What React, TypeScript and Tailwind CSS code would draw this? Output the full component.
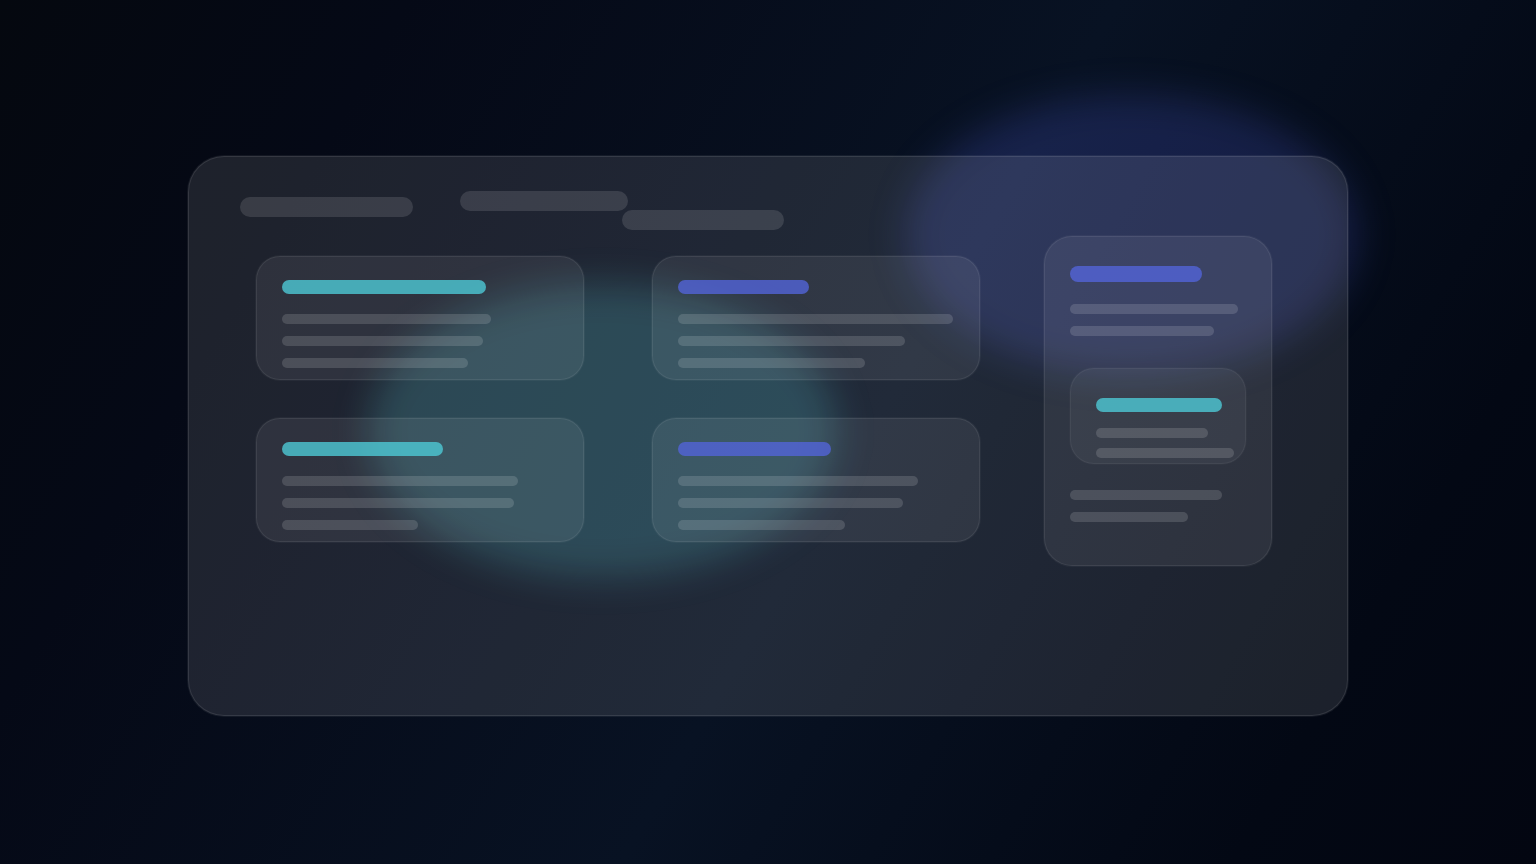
import React from 'react';

type Tone = 'teal' | 'indigo';

interface CardData {
    tone: Tone;
    title: number;
    lines: number[];
}

const cards: CardData[] = [
    { tone: 'teal', title: 204, lines: [209, 201, 186] },
    { tone: 'indigo', title: 131, lines: [275, 227, 187] },
    { tone: 'teal', title: 161, lines: [236, 232, 136] },
    { tone: 'indigo', title: 153, lines: [240, 225, 167] },
];

const toneClass: Record<Tone, string> = {
    teal: 'bg-[#4dc9d6]/80',
    indigo: 'bg-[#5364d8]/80',
};

function Title({ tone, width, tall }: { tone: Tone; width: number; tall?: boolean }) {
    return <div className={`rounded-lg ${tall ? 'h-4' : 'h-3.5'} ${toneClass[tone]}`} style={{ width }} />;
}

function Lines({ widths, tight }: { widths: number[]; tight?: boolean }) {
    return (
        <div className={`flex flex-col ${tight ? 'gap-2.5' : 'gap-3'}`}>
            {widths.map((width, index) => (
                <div key={index} className="h-2.5 rounded-full bg-white/14" style={{ width }} />
            ))}
        </div>
    );
}

function Card({ card }: { card: CardData }) {
    return (
        <article className="flex h-[124px] flex-col gap-5 rounded-3xl bg-white/7 px-[26px] pt-6 ring-1 ring-white/4 inset-ring inset-ring-white/8">
            <Title tone={card.tone} width={card.title} />
            <Lines widths={card.lines} />
        </article>
    );
}

export default function App() {
    return (
        <div className="relative flex min-h-screen items-center justify-center overflow-hidden bg-linear-[120deg,#05080f_0%,#050916_20%,#081223_55%,#030814_85%,#030611_100%] px-8 pt-2">
            {/* Glow behind the glass */}
            <div className="absolute top-[11%] left-[59%] h-[280px] w-[452px] rounded-[50%] bg-[#4f5bd5]/22 blur-[18px]" />
            <div className="absolute top-[33%] left-[24%] h-[292px] w-[468px] rounded-[50%] bg-[#4dc9d6]/21 blur-[18px]" />

            <main className="relative min-h-[560px] w-full max-w-[1160px] rounded-[36px] bg-white/10 ring-1 ring-white/6 inset-ring inset-ring-white/10">
                <header className="flex h-20 items-start pl-[52px]">
                    <div className="mt-[41px] h-5 w-[173px] rounded-full bg-white/12" />
                    <div className="mt-[35px] ml-[47px] h-5 w-[168px] rounded-full bg-white/12" />
                    <div className="mt-[54px] -ml-1.5 h-5 w-[162px] rounded-full bg-white/12" />
                </header>

                <div className="flex items-start gap-16 pr-[76px] pl-[68px]">
                    <section className="mt-5 grid flex-1 grid-cols-2 gap-x-[68px] gap-y-[38px]">
                        {cards.map((card, index) => (
                            <Card key={index} card={card} />
                        ))}
                    </section>

                    <aside className="h-[330px] w-[228px] rounded-[28px] bg-white/7 px-[26px] pt-[30px] ring-1 ring-white/4 inset-ring inset-ring-white/8">
                        <Title tone="indigo" width={132} tall />
                        <div className="mt-[22px]">
                            <Lines widths={[168, 144]} />
                        </div>

                        <div className="mt-8 mb-[26px] flex h-24 flex-col gap-4 rounded-3xl bg-white/5 pt-[30px] pr-3 pl-[26px] ring-1 ring-white/2 inset-ring inset-ring-white/5">
                            <Title tone="teal" width={126} />
                            <Lines widths={[112, 138]} tight />
                        </div>

                        <Lines widths={[152, 118]} />
                    </aside>
                </div>
            </main>
        </div>
    );
}
